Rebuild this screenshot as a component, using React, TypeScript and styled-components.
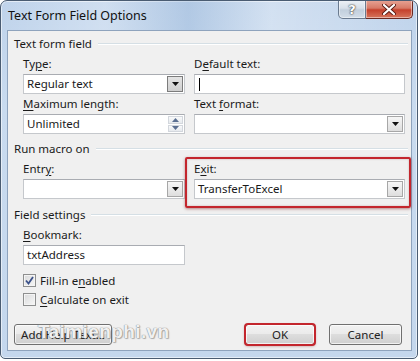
import React from 'react';
import styled, { createGlobalStyle } from 'styled-components';

const Global = createGlobalStyle`
  html, body { margin: 0; padding: 0; background: #ffffff; }
  body { font-family: "Noto Sans", "Open Sans", sans-serif; font-size: 11.5px; color: #1a1a1a; }
  #root { width: 420px; height: 361px; }
`;

const Window = styled.div`
  position: relative;
  width: 418px;
  height: 359px;
  box-sizing: border-box;
  border: 1px solid #4a5c72;
  border-radius: 7px 7px 5px 5px;
  background: linear-gradient(to bottom, #bfd3eb 0%, #c9dbef 30%, #c4d7ed 100%);
  box-shadow: inset 0 0 0 1px rgba(255, 255, 255, 0.55);
  display: flex;
  flex-direction: column;
  padding: 0 5px 7px 6px;
  overflow: hidden;
`;

const TitleBar = styled.div`
  height: 29px;
  display: flex;
  align-items: center;
  font-size: 12.5px;
  color: #111;
  background: linear-gradient(
    to right,
    rgba(255, 255, 255, 0) 0%,
    rgba(255, 255, 255, 0.25) 25%,
    rgba(150, 180, 215, 0.35) 45%,
    rgba(255, 255, 255, 0.3) 65%,
    rgba(255, 255, 255, 0) 100%
  );
  margin: 0 -5px 0 -6px;
  padding-left: 7px;
`;

const CaptionButtons = styled.div`
  position: absolute;
  top: -1px;
  right: 4px;
  display: flex;
`;

const CaptionButton = styled.div<{ $close?: boolean }>`
  height: 19px;
  width: ${(p) => (p.$close ? '47px' : '28px')};
  box-sizing: border-box;
  display: flex;
  align-items: center;
  justify-content: center;
  border: 1px solid ${(p) => (p.$close ? '#6b2a22' : '#6a7a8f')};
  border-top: none;
  border-left: ${(p) => (p.$close ? 'none' : '1px solid #6a7a8f')};
  border-radius: ${(p) => (p.$close ? '0 0 5px 0' : '0 0 0 5px')};
  background: ${(p) =>
    p.$close
      ? 'linear-gradient(to bottom, #e8a596 0%, #d77a67 45%, #c5412c 55%, #d6755c 100%)'
      : 'linear-gradient(to bottom, #eef2f7 0%, #d7e0ea 45%, #c2cfdd 55%, #d3dde8 100%)'};
  box-shadow: inset 0 0 0 1px rgba(255, 255, 255, 0.45);
  color: #fff;
  font-family: "DejaVu Sans", sans-serif;
  font-weight: bold;
  font-size: 13px;
  text-shadow: 0 0 2px #333, 0 0 1px #333;
`;

const Client = styled.div`
  position: relative;
  flex: 1;
  box-sizing: border-box;
  border: 1px solid #8ea3bd;
  background: #f0f0f0;
  display: flex;
  flex-direction: column;
  padding: 5px 3px 5px 6px;
`;

const GroupHeader = styled.div<{ $mt?: number }>`
  display: flex;
  align-items: center;
  gap: 6px;
  height: 16px;
  margin-top: ${(p) => p.$mt ?? 0}px;
  line-height: 16px;
`;

const HeaderLine = styled.div`
  flex: 1;
  border-top: 1px solid #d5dfe5;
  border-bottom: 1px solid #ffffff;
`;

const FieldGrid = styled.div`
  display: grid;
  grid-template-columns: 162px 211px;
  column-gap: 9px;
  row-gap: 2px;
  padding-left: 9px;
  margin-top: 4px;
`;

const FieldBlock = styled.div`
  display: flex;
  flex-direction: column;
  gap: 3px;
`;

const Label = styled.div`
  height: 15px;
  line-height: 15px;
  white-space: nowrap;
`;

const Key = styled.span`
  text-decoration: underline;
  text-underline-offset: 2px;
`;

const Box = styled.div`
  position: relative;
  height: 20px;
  box-sizing: border-box;
  background: #fff;
  border: 1px solid #c5c8cc;
  border-top-color: #a9acb2;
  display: flex;
  align-items: center;
  padding-left: 3px;
  padding-right: 1px;
  white-space: nowrap;
`;

const BoxText = styled.span`
  flex: 1;
  line-height: 16px;
`;

const Caret = styled.span`
  display: inline-block;
  width: 1px;
  height: 13px;
  background: #000;
  margin-left: 1px;
  vertical-align: middle;
`;

const DropButton = styled.div<{ $hot?: boolean }>`
  width: 16px;
  height: 16px;
  box-sizing: border-box;
  border: 1px solid ${(p) => (p.$hot ? '#7c7c7c' : '#a7a7a7')};
  background: ${(p) =>
    p.$hot
      ? 'linear-gradient(to bottom, #e4e4e4, #cfcfcf)'
      : 'linear-gradient(to bottom, #f6f6f6, #dedede)'};
  display: flex;
  align-items: center;
  justify-content: center;
`;

const Spinner = styled.div`
  width: 15px;
  height: 16px;
  display: flex;
  flex-direction: column;
  gap: 1px;
`;

const SpinHalf = styled.div`
  flex: 1;
  box-sizing: border-box;
  border: 1px solid #d3d7dd;
  background: linear-gradient(to bottom, #f8f9fa, #e7eaee);
  display: flex;
  align-items: center;
  justify-content: center;
`;

const CheckList = styled.div`
  display: flex;
  flex-direction: column;
  gap: 1px;
  padding-left: 9px;
  margin-top: 6px;
`;

const CheckRow = styled.div`
  height: 18px;
  display: flex;
  align-items: center;
  gap: 4px;
`;

const CheckBox = styled.div`
  width: 13px;
  height: 13px;
  box-sizing: border-box;
  border: 1px solid #8e8f8f;
  background: linear-gradient(to bottom right, #d9dadb, #f7f7f7);
  box-shadow: inset 0 0 0 1px #f4f4f4;
  display: flex;
  align-items: center;
  justify-content: center;
`;

const ButtonRow = styled.div`
  margin-top: auto;
  display: flex;
  align-items: center;
  padding-right: 6px;
`;

const PushButton = styled.div<{ $w: number; $marked?: boolean; $ml?: number }>`
  width: ${(p) => p.$w}px;
  height: 21px;
  margin-left: ${(p) => p.$ml ?? 0}px;
  box-sizing: border-box;
  border: 1px solid #707070;
  border-radius: 3px;
  background: linear-gradient(to bottom, #f2f2f2 0%, #ebebeb 45%, #dddddd 50%, #cfcfcf 100%);
  box-shadow: inset 0 0 0 1px rgba(255, 255, 255, 0.7);
  display: flex;
  align-items: center;
  justify-content: center;
  white-space: nowrap;
  color: #222;
  ${(p) =>
    p.$marked
      ? 'outline: 2px solid #c3262d; outline-offset: -1px; box-shadow: 0 1px 3px rgba(120,0,0,0.45), inset 0 0 0 1px rgba(255,255,255,0.7);'
      : ''}
`;

const Spacer = styled.div`
  flex: 1;
`;

const Highlight = styled.div`
  position: absolute;
  left: 177px;
  top: 126px;
  width: 226px;
  height: 51px;
  box-sizing: border-box;
  border: 2px solid #c3262d;
  border-radius: 2px;
  box-shadow: 0 1px 3px rgba(110, 0, 0, 0.45), inset 0 0 2px rgba(110, 0, 0, 0.3);
  pointer-events: none;
`;

const Watermark = styled.div`
  position: absolute;
  left: 30px;
  top: 290px;
  font-family: "Liberation Sans", Arial, sans-serif;
  font-size: 19px;
  font-weight: bold;
  letter-spacing: 0.4px;
  color: rgba(255, 255, 255, 0.9);
  text-shadow: 0 0 1px #8a8a8a, 0 0 1px #8a8a8a, 1px 1px 1px rgba(0, 0, 0, 0.25);
  pointer-events: none;
`;

const Arrow = () => (
  <svg width="7" height="4" viewBox="0 0 7 4">
    <path d="M0 0 H7 L3.5 4 Z" fill="#111" />
  </svg>
);

const SpinArrow = ({ up }: { up?: boolean }) => (
  <svg width="7" height="4" viewBox="0 0 7 4">
    <path d={up ? 'M0 4 H7 L3.5 0 Z' : 'M0 0 H7 L3.5 4 Z'} fill="#5b6f91" />
  </svg>
);

const Check = () => (
  <svg width="9" height="9" viewBox="0 0 9 9">
    <path d="M1 4.5 L3.5 7.5 L8 1" fill="none" stroke="#3c528a" strokeWidth="1.8" />
  </svg>
);

const CloseGlyph = () => (
  <svg width="14" height="11" viewBox="0 0 14 11">
    <path d="M2 1 L12 10 M12 1 L2 10" stroke="#5a1c14" strokeWidth="4" strokeLinecap="round" />
    <path d="M2 1 L12 10 M12 1 L2 10" stroke="#ffffff" strokeWidth="2.2" strokeLinecap="round" />
  </svg>
);

export default function App() {
  return (
    <>
      <Global />
      <Window>
        <TitleBar>Text Form Field Options</TitleBar>
        <CaptionButtons>
          <CaptionButton>?</CaptionButton>
          <CaptionButton $close>
            <CloseGlyph />
          </CaptionButton>
        </CaptionButtons>
        <Client>
          <GroupHeader>
            Text form field
            <HeaderLine />
          </GroupHeader>
          <FieldGrid>
            <FieldBlock>
              <Label>Ty<Key>p</Key>e:</Label>
              <Box>
                <BoxText>Regular text</BoxText>
                <DropButton $hot>
                  <Arrow />
                </DropButton>
              </Box>
            </FieldBlock>
            <FieldBlock>
              <Label>D<Key>e</Key>fault text:</Label>
              <Box>
                <BoxText>
                  <Caret />
                </BoxText>
              </Box>
            </FieldBlock>
            <FieldBlock>
              <Label><Key>M</Key>aximum length:</Label>
              <Box>
                <BoxText>Unlimited</BoxText>
                <Spinner>
                  <SpinHalf>
                    <SpinArrow up />
                  </SpinHalf>
                  <SpinHalf>
                    <SpinArrow />
                  </SpinHalf>
                </Spinner>
              </Box>
            </FieldBlock>
            <FieldBlock>
              <Label>Text <Key>f</Key>ormat:</Label>
              <Box>
                <BoxText />
                <DropButton>
                  <Arrow />
                </DropButton>
              </Box>
            </FieldBlock>
          </FieldGrid>

          <GroupHeader $mt={7}>
            Run macro on
            <HeaderLine />
          </GroupHeader>
          <FieldGrid>
            <FieldBlock>
              <Label>Entr<Key>y</Key>:</Label>
              <Box>
                <BoxText />
                <DropButton>
                  <Arrow />
                </DropButton>
              </Box>
            </FieldBlock>
            <FieldBlock>
              <Label>E<Key>x</Key>it:</Label>
              <Box>
                <BoxText>TransferToExcel</BoxText>
                <DropButton>
                  <Arrow />
                </DropButton>
              </Box>
            </FieldBlock>
          </FieldGrid>

          <GroupHeader $mt={8}>
            Field settings
            <HeaderLine />
          </GroupHeader>
          <FieldGrid>
            <FieldBlock>
              <Label><Key>B</Key>ookmark:</Label>
              <Box>
                <BoxText>txtAddress</BoxText>
              </Box>
            </FieldBlock>
          </FieldGrid>
          <CheckList>
            <CheckRow>
              <CheckBox>
                <Check />
              </CheckBox>
              <span>Fill-in e<Key>n</Key>abled</span>
            </CheckRow>
            <CheckRow>
              <CheckBox />
              <span><Key>C</Key>alculate on exit</span>
            </CheckRow>
          </CheckList>

          <ButtonRow>
            <PushButton $w={98}>Add Help Text...</PushButton>
            <Spacer />
            <PushButton $w={70} $marked>
              OK
            </PushButton>
            <PushButton $w={73} $ml={14}>
              Cancel
            </PushButton>
          </ButtonRow>

          <Highlight />
          <Watermark>Taimienphi.vn</Watermark>
        </Client>
      </Window>
    </>
  );
}
